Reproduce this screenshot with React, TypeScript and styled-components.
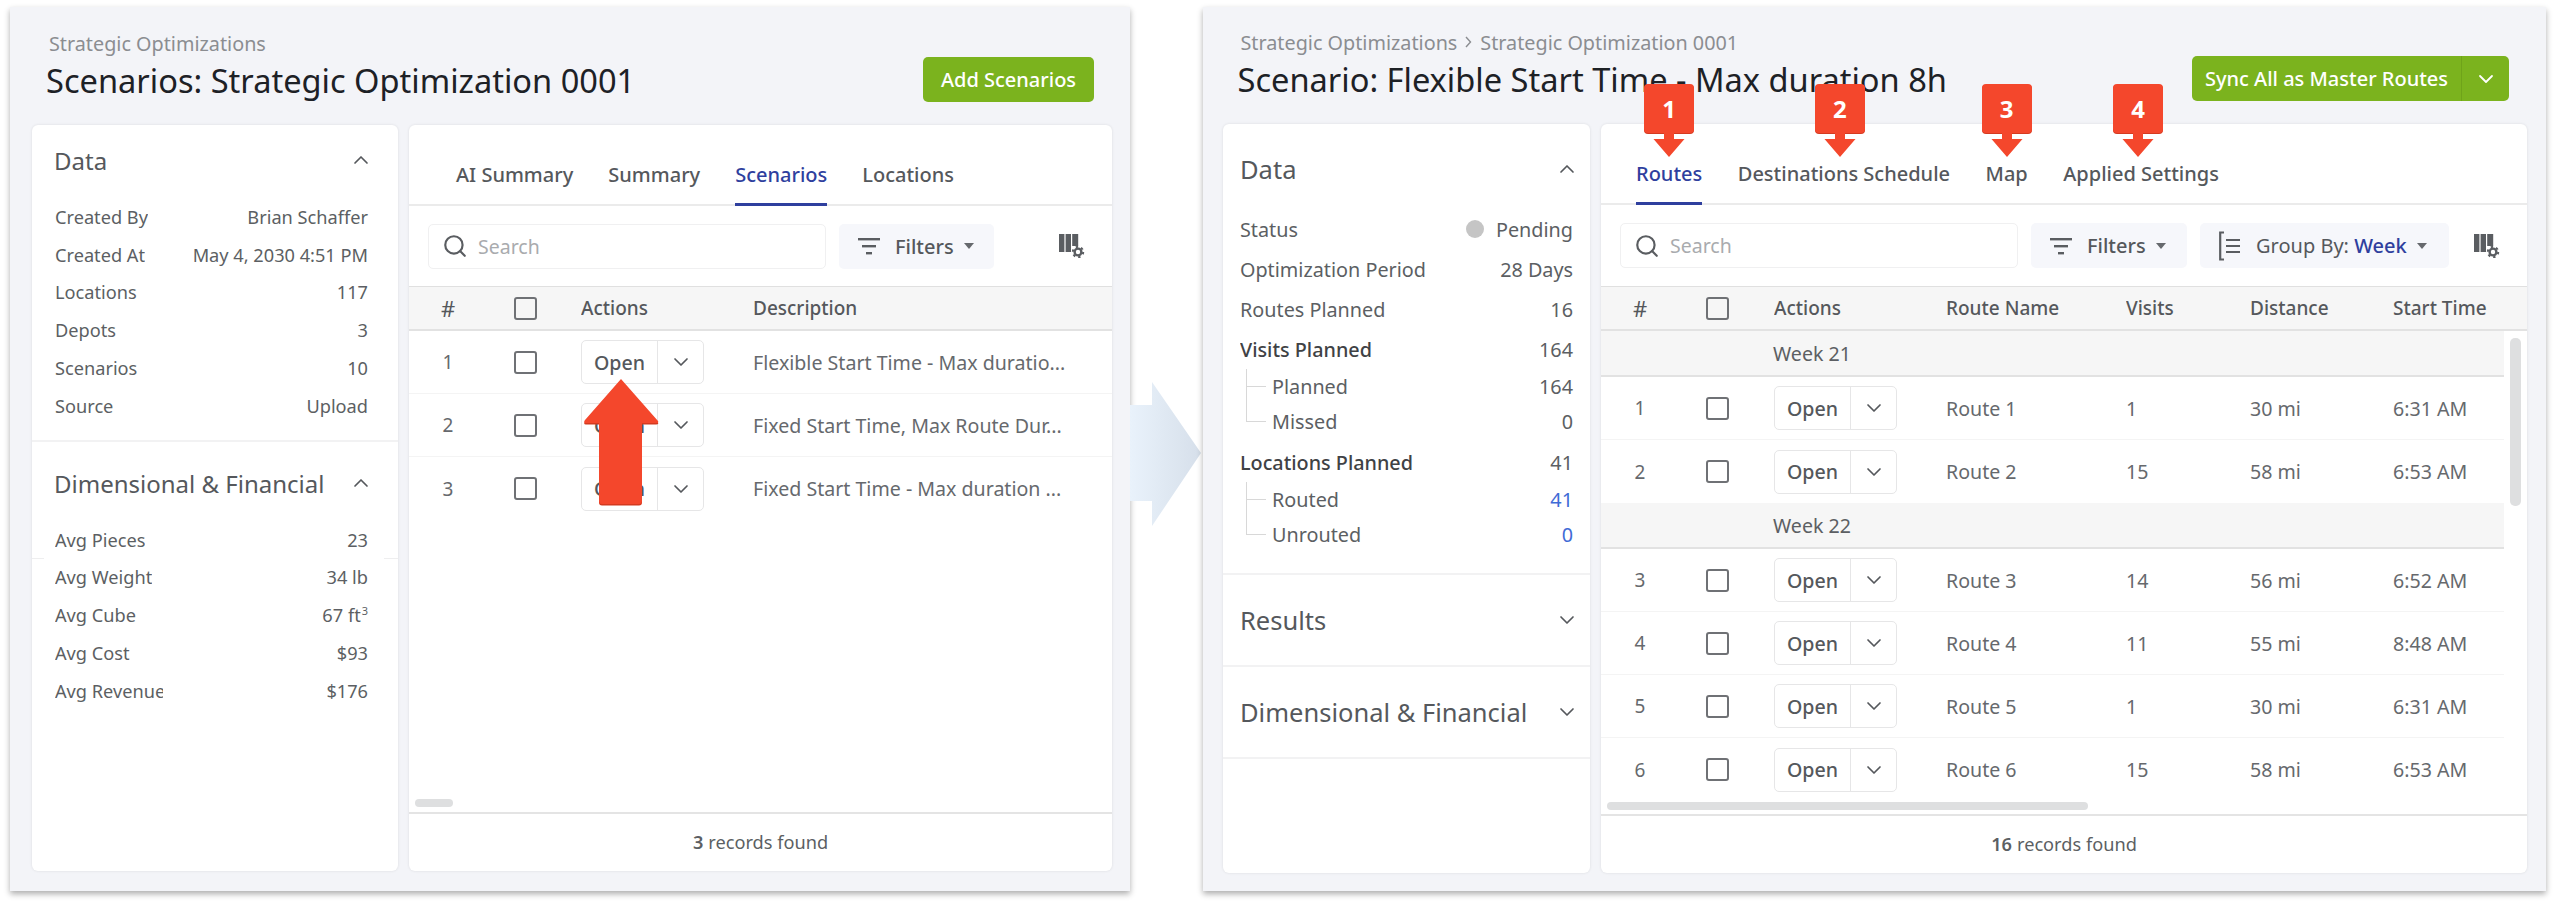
import styled, { createGlobalStyle } from "styled-components";
import { ChevronDown, ChevronUp, Search as SearchGlyph } from "lucide-react";

const GlobalStyle = createGlobalStyle`
  html, body {
    margin: 0;
    padding: 0;
    background: #fff;
  }

  * {
    box-sizing: border-box;
  }

  body {
    font-family: "Noto Sans", "Open Sans", sans-serif;
    color: #555;
  }
`;

const Page = styled.div`
  width: 2556px;
  height: 903px;
  padding: 7px 0 0 10px;
  display: flex;
  align-items: flex-start;
  overflow: hidden;
`;

const Window = styled.div<{ $width: number }>`
  width: ${(p) => p.$width}px;
  height: 884px;
  flex: none;
  display: flex;
  flex-direction: column;
  background: #f3f4f8;
  box-shadow: 0 3px 6px rgba(0, 0, 0, 0.32);
`;

const Header = styled.div<{ $left: number; $right: number; $height: number }>`
  height: ${(p) => p.$height}px;
  flex: none;
  padding: 0 ${(p) => p.$right}px 0 ${(p) => p.$left}px;
  display: flex;
  align-items: flex-start;
  justify-content: space-between;
`;

const Heading = styled.div`
  display: flex;
  flex-direction: column;
`;

const Crumbs = styled.div<{ $top: number }>`
  margin: ${(p) => p.$top}px 0 0 3px;
  display: flex;
  align-items: center;
  gap: 8px;
  height: 26px;
  font-size: 19.8px;
  color: #8b8d91;
`;

const Title = styled.h1`
  margin: 1px 0 0;
  font-size: 32.6px;
  line-height: 48px;
  font-weight: 400;
  color: #1d2126;
  white-space: nowrap;
`;

const GreenButton = styled.div<{ $top: number }>`
  margin-top: ${(p) => p.$top}px;
  height: 45px;
  display: flex;
  align-items: center;
  background: #7bb31e;
  border-radius: 5px;
  color: #fff;
  font-size: 20px;
  font-weight: 500;
  white-space: nowrap;
`;

const GreenLabel = styled.span<{ $width: number }>`
  width: ${(p) => p.$width}px;
  text-align: center;
`;

const GreenSplit = styled.span`
  width: 48px;
  height: 100%;
  display: flex;
  align-items: center;
  justify-content: center;
  border-left: 1px solid #6fa31a;
`;

const Columns = styled.div<{ $left: number; $right: number; $bottom: number }>`
  flex: 1;
  min-height: 0;
  padding: 0 ${(p) => p.$right}px ${(p) => p.$bottom}px ${(p) => p.$left}px;
  display: flex;
  gap: 11px;
`;

const Card = styled.div`
  background: #fff;
  border-radius: 6px;
  box-shadow: 0 0 3px rgba(0, 0, 0, 0.1);
`;

const SideCard = styled(Card)<{ $width: number }>`
  width: ${(p) => p.$width}px;
  flex: none;
`;

const MainCard = styled(Card)`
  flex: 1;
  min-width: 0;
  display: flex;
  flex-direction: column;
`;

const Section = styled.section<{ $pad?: number; $line?: boolean }>`
  padding: 0 0 ${(p) => p.$pad ?? 0}px;
  border-bottom: ${(p) => (p.$line ? "2px solid #f2f2f3" : "none")};
`;

const SectionHead = styled.div<{
  $height: number;
  $top?: number;
  $bottom?: number;
  $size: number;
  $left: number;
  $right: number;
}>`
  height: ${(p) => p.$height}px;
  padding: ${(p) => p.$top ?? 0}px ${(p) => p.$right}px ${(p) => p.$bottom ?? 0}px ${(p) => p.$left}px;
  display: flex;
  align-items: center;
  justify-content: space-between;
  font-size: ${(p) => p.$size}px;
  color: #55585c;
`;

const Row = styled.div<{
  $height: number;
  $size: number;
  $left: number;
  $right: number;
  $strong?: boolean;
  $stubs?: boolean;
  $gap?: number;
}>`
  height: ${(p) => p.$height}px;
  margin-top: ${(p) => p.$gap ?? 0}px;
  padding: 0 ${(p) => p.$right}px 0 ${(p) => p.$left}px;
  display: flex;
  align-items: center;
  justify-content: space-between;
  font-size: ${(p) => p.$size}px;
  color: #5c5f63;
  font-weight: ${(p) => (p.$strong ? 500 : 400)};
  ${(p) =>
    p.$stubs
      ? `background: linear-gradient(90deg, #eeeeef 0 12px, transparent 12px calc(100% - 14px), #eeeeef calc(100% - 14px)) left bottom / 100% 1px no-repeat;`
      : ""}
`;

const RowLabel = styled.span<{ $clip?: number; $dark?: boolean }>`
  white-space: nowrap;
  overflow: hidden;
  color: ${(p) => (p.$dark ? "#3f4245" : "inherit")};
  ${(p) => (p.$clip ? `max-width: ${p.$clip}px;` : "")}
`;

const RowValue = styled.span<{ $blue?: boolean }>`
  display: flex;
  align-items: center;
  gap: 12px;
  font-weight: 400;
  color: ${(p) => (p.$blue ? "#3f6bd6" : "inherit")};

  sup {
    font-size: 11px;
    line-height: 0;
    margin-left: 1px;
  }
`;

const Dot = styled.i`
  width: 18px;
  height: 18px;
  border-radius: 50%;
  background: #c5c5c5;
`;

const SubRow = styled(Row)<{ $last?: boolean }>`
  padding-left: 49px;
  background:
    linear-gradient(#d8d8d8, #d8d8d8) 23px ${(p) => (p.$last ? "0 / 1px 50%" : "0 / 1px 100%")} no-repeat,
    linear-gradient(#d8d8d8, #d8d8d8) 23px 50% / 20px 1px no-repeat;
`;

const TabBar = styled.div<{ $left: number; $gap: number }>`
  height: 81px;
  flex: none;
  padding-left: ${(p) => p.$left}px;
  display: flex;
  gap: ${(p) => p.$gap}px;
  border-bottom: 2px solid #ebebeb;
`;

const Tab = styled.div<{ $active?: boolean }>`
  position: relative;
  height: 81px;
  padding-top: 21px;
  display: flex;
  align-items: center;
  font-size: 20px;
  font-weight: 500;
  white-space: nowrap;
  color: ${(p) => (p.$active ? "#2f3f9e" : "#55585c")};
  border-bottom: 3px solid ${(p) => (p.$active ? "#2f3f9e" : "transparent")};
`;

const Callout = styled.div<{ $shift: number }>`
  position: absolute;
  left: 50%;
  top: -40px;
  margin-left: ${(p) => p.$shift - 25}px;
  width: 50px;
  display: flex;
  flex-direction: column;
  align-items: center;
`;

const CalloutBox = styled.div`
  width: 50px;
  height: 49px;
  display: flex;
  align-items: center;
  justify-content: center;
  background: #f4472c;
  border-radius: 4px;
  box-shadow: 0 1px 0 #d43a20;
  color: #fff;
  font-size: 24px;
  font-weight: 700;
`;

const Toolbar = styled.div<{ $height: number }>`
  height: ${(p) => p.$height}px;
  flex: none;
  padding: 0 27px 0 19px;
  display: flex;
  align-items: center;
  gap: 13px;
`;

const SearchBox = styled.div`
  width: 398px;
  height: 45px;
  padding-left: 13px;
  display: flex;
  align-items: center;
  gap: 10px;
  border: 1px solid #f0f0f1;
  border-radius: 5px;
  font-size: 19.5px;
  color: #a9abae;
`;

const ToolButton = styled.div<{ $width: number }>`
  width: ${(p) => p.$width}px;
  height: 45px;
  padding-left: 19px;
  display: flex;
  align-items: center;
  background: #f6f7fb;
  border-radius: 5px;
  font-size: 20px;
  font-weight: 500;
  color: #55585c;
  white-space: nowrap;
`;

const ToolText = styled.span<{ $plain?: boolean }>`
  margin-left: 15px;
  font-weight: ${(p) => (p.$plain ? 400 : 500)};

  b {
    font-weight: 500;
    color: #2f3f9e;
  }
`;

const Caret = styled.i`
  margin-left: 10px;
  width: 0;
  height: 0;
  border-left: 5px solid transparent;
  border-right: 5px solid transparent;
  border-top: 6px solid #66696d;
`;

const ColumnsButton = styled.svg`
  margin-left: auto;
  width: 26px;
  height: 24px;
  flex: none;
`;

const TableHead = styled.div<{ $columns: string }>`
  height: 45px;
  flex: none;
  display: grid;
  grid-template-columns: ${(p) => p.$columns};
  align-items: center;
  background: #f6f6f6;
  border-top: 1px solid #e0e0e0;
  border-bottom: 2px solid #e2e2e2;
  font-size: 19px;
  font-weight: 500;
  color: #55585c;
`;

const TableBody = styled.div<{ $gutter: number }>`
  position: relative;
  flex: 1;
  min-height: 0;
  padding-right: ${(p) => p.$gutter}px;
  overflow: hidden;
`;

const WeekRow = styled.div`
  height: 46px;
  padding-left: 172px;
  display: flex;
  align-items: center;
  background: #f6f6f6;
  border-bottom: 2px solid #e2e2e2;
  font-size: 19.6px;
  color: #5c5f63;
`;

const TableRow = styled.div<{ $columns: string }>`
  height: 63px;
  display: grid;
  grid-template-columns: ${(p) => p.$columns};
  align-items: center;
  border-bottom: 1px solid #f4f4f4;
  font-size: 19.6px;
  color: #66696d;
  white-space: nowrap;

  &:last-of-type {
    border-bottom: none;
  }
`;

const NumCell = styled.span<{ $head?: boolean }>`
  text-align: center;
  font-size: ${(p) => (p.$head ? 22 : 19)}px;
  font-weight: 400;
`;

const CheckCell = styled.span`
  padding-left: 27px;
  display: flex;
`;

const CheckBox = styled.i`
  width: 23px;
  height: 23px;
  border: 2px solid #6f7175;
  border-radius: 3px;
`;

const TextCell = styled.span`
  overflow: hidden;
`;

const OpenGroup = styled.div`
  width: 123px;
  height: 44px;
  display: flex;
  align-items: center;
  border: 1px solid #e6e6e7;
  border-radius: 5px;
  font-size: 19.6px;
  font-weight: 500;
  color: #55585c;
`;

const OpenLabel = styled.span`
  width: 75px;
  text-align: center;
`;

const OpenSplit = styled.span`
  flex: 1;
  height: 100%;
  display: flex;
  align-items: center;
  justify-content: center;
  border-left: 1px solid #e6e6e7;
  color: #55585c;
`;

const Thumb = styled.i<{ $side: "bottom" | "right"; $offset: number; $start: number; $length: number }>`
  position: absolute;
  background: #dedfe0;
  border-radius: 5px;
  ${(p) =>
    p.$side === "bottom"
      ? `left: ${p.$start}px; bottom: ${p.$offset}px; width: ${p.$length}px; height: 8px;`
      : `right: ${p.$offset}px; top: ${p.$start}px; width: 11px; height: ${p.$length}px;`}
`;

const Footer = styled.div`
  height: 59px;
  flex: none;
  padding-bottom: 2px;
  display: flex;
  align-items: center;
  justify-content: center;
  border-top: 2px solid #e4e4e4;
  font-size: 18.2px;
  color: #5c5f63;

  b {
    font-weight: 600;
    margin-right: 5px;
  }
`;

const BigArrow = styled.svg`
  width: 73px;
  height: 144px;
  flex: none;
  align-self: center;
  margin-top: -3px;
`;

const UpArrow = styled.svg`
  position: absolute;
  left: 175px;
  top: 47px;
  width: 75px;
  height: 128px;
`;

const FilterIcon = () => (
  <svg width="22" height="18" viewBox="0 0 22 18" fill="#5a5d61">
    <rect x="0" y="1" width="22" height="2.4" />
    <rect x="4" y="8" width="14" height="2.4" />
    <rect x="8" y="15" width="6" height="2.4" />
  </svg>
);

const GroupIcon = () => (
  <svg width="22" height="30" viewBox="0 0 22 30" fill="none" stroke="#5a5d61" strokeWidth="2.2">
    <path d="M5 1.5H1.2V28.5H5" />
    <path d="M7 9H21M7 15H21M7 21H21" />
  </svg>
);

const ColumnsIcon = () => (
  <ColumnsButton viewBox="0 0 26 24">
    <g fill="#5a5d61">
      <rect x="0" y="0" width="5.4" height="18" />
      <rect x="6.6" y="0" width="5.4" height="18" />
      <rect x="13.2" y="0" width="6" height="12" />
    </g>
    <circle cx="19" cy="18" r="3.4" fill="none" stroke="#5a5d61" strokeWidth="2.4" />
    <circle cx="19" cy="18" r="5.2" fill="none" stroke="#5a5d61" strokeWidth="2" strokeDasharray="2.4 3" />
  </ColumnsButton>
);

const SearchField = () => (
  <SearchBox>
    <SearchGlyph size={26} strokeWidth={2} color="#5a5d61" />
    Search
  </SearchBox>
);

const FiltersButton = ({ width }: { width: number }) => (
  <ToolButton $width={width}>
    <FilterIcon />
    <ToolText>Filters</ToolText>
    <Caret />
  </ToolButton>
);

const OpenButton = () => (
  <OpenGroup>
    <OpenLabel>Open</OpenLabel>
    <OpenSplit>
      <ChevronDown size={24} strokeWidth={1.7} />
    </OpenSplit>
  </OpenGroup>
);

const CalloutArrow = ({ n, shift }: { n: number; shift: number }) => (
  <Callout $shift={shift}>
    <CalloutBox>{n}</CalloutBox>
    <svg width="32" height="25" viewBox="0 0 32 25">
      <path d="M11 0H21V6H31.5L16 24L0.5 6H11Z" fill="#f4472c" />
    </svg>
  </Callout>
);

const scenarioColumns = "78px 94px 172px 1fr";
const routeColumns = "78px 95px 172px 180px 124px 143px 1fr";

const scenarios = [
  "Flexible Start Time - Max duratio...",
  "Fixed Start Time, Max Route Dur...",
  "Fixed Start Time - Max duration ...",
];

const dataRows = [
  ["Created By", "Brian Schaffer"],
  ["Created At", "May 4, 2030 4:51 PM"],
  ["Locations", "117"],
  ["Depots", "3"],
  ["Scenarios", "10"],
  ["Source", "Upload"],
];

const weeks = [
  {
    name: "Week 21",
    routes: [
      [1, "Route 1", "1", "30 mi", "6:31 AM"],
      [2, "Route 2", "15", "58 mi", "6:53 AM"],
    ],
  },
  {
    name: "Week 22",
    routes: [
      [3, "Route 3", "14", "56 mi", "6:52 AM"],
      [4, "Route 4", "11", "55 mi", "8:48 AM"],
      [5, "Route 5", "1", "30 mi", "6:31 AM"],
      [6, "Route 6", "15", "58 mi", "6:53 AM"],
    ],
  },
];

const ScenariosWindow = () => {
  const row = { $height: 37.8, $size: 18.2, $left: 23, $right: 30 };
  const head = { $size: 24, $left: 22, $right: 25 };

  return (
    <Window $width={1120}>
      <Header $left={36} $right={36} $height={118}>
        <Heading>
          <Crumbs $top={23}>Strategic Optimizations</Crumbs>
          <Title>Scenarios: Strategic Optimization 0001</Title>
        </Heading>
        <GreenButton $top={50}>
          <GreenLabel $width={171}>Add Scenarios</GreenLabel>
        </GreenButton>
      </Header>
      <Columns $left={22} $right={18} $bottom={20}>
        <SideCard $width={366}>
          <Section $pad={15} $line>
            <SectionHead {...head} $height={73} $bottom={3}>
              Data
              <ChevronUp size={24} strokeWidth={1.7} />
            </SectionHead>
            {dataRows.map(([label, value]) => (
              <Row key={label} {...row}>
                <RowLabel>{label}</RowLabel>
                <RowValue>{value}</RowValue>
              </Row>
            ))}
          </Section>
          <Section>
            <SectionHead {...head} $height={79} $top={4}>
              Dimensional &amp; Financial
              <ChevronUp size={24} strokeWidth={1.7} />
            </SectionHead>
            <Row {...row} $stubs>
              <RowLabel>Avg Pieces</RowLabel>
              <RowValue>23</RowValue>
            </Row>
            <Row {...row}>
              <RowLabel>Avg Weight</RowLabel>
              <RowValue>34 lb</RowValue>
            </Row>
            <Row {...row}>
              <RowLabel>Avg Cube</RowLabel>
              <RowValue>
                <span>
                  67 ft<sup>3</sup>
                </span>
              </RowValue>
            </Row>
            <Row {...row}>
              <RowLabel>Avg Cost</RowLabel>
              <RowValue>$93</RowValue>
            </Row>
            <Row {...row}>
              <RowLabel $clip={108}>Avg Revenue</RowLabel>
              <RowValue>$176</RowValue>
            </Row>
          </Section>
        </SideCard>
        <MainCard>
          <TabBar $left={47} $gap={35}>
            <Tab>AI Summary</Tab>
            <Tab>Summary</Tab>
            <Tab $active>Scenarios</Tab>
            <Tab>Locations</Tab>
          </TabBar>
          <Toolbar $height={80}>
            <SearchField />
            <FiltersButton width={155} />
            <ColumnsIcon />
          </Toolbar>
          <TableHead $columns={scenarioColumns}>
            <NumCell $head>#</NumCell>
            <CheckCell>
              <CheckBox />
            </CheckCell>
            <TextCell>Actions</TextCell>
            <TextCell>Description</TextCell>
          </TableHead>
          <TableBody $gutter={0}>
            {scenarios.map((text, i) => (
              <TableRow key={text} $columns={scenarioColumns}>
                <NumCell>{i + 1}</NumCell>
                <CheckCell>
                  <CheckBox />
                </CheckCell>
                <OpenButton />
                <TextCell>{text}</TextCell>
              </TableRow>
            ))}
            <UpArrow viewBox="0 0 75 128">
              <path
                d="M37 1L74 43Q75 45 72 45H58V123Q58 126 55 126H18Q15 126 15 123V45H2Q-1 45 1 42Z"
                fill="#d43a20"
                transform="translate(0 1.5)"
              />
              <path d="M37 1L74 43Q75 45 72 45H58V123Q58 126 55 126H18Q15 126 15 123V45H2Q-1 45 1 42Z" fill="#f4472c" />
            </UpArrow>
            <Thumb $side="bottom" $offset={5} $start={6} $length={38} />
          </TableBody>
          <Footer>
            <b>3</b> records found
          </Footer>
        </MainCard>
      </Columns>
    </Window>
  );
};

const RouteWindow = () => {
  const row = { $height: 40, $size: 19.8, $left: 17, $right: 17 };
  const sub = { $height: 35, $size: 19.8, $left: 17, $right: 17 };
  const head = { $size: 25.5, $left: 17, $right: 11 };

  return (
    <Window $width={1343}>
      <Header $left={34.5} $right={37} $height={117}>
        <Heading>
          <Crumbs $top={22}>
            Strategic Optimizations
            <svg width="7" height="12" viewBox="0 0 7 12" fill="none" stroke="#8b8d91" strokeWidth="1.4">
              <path d="M1 1l4.5 5L1 11" />
            </svg>
            Strategic Optimization 0001
          </Crumbs>
          <Title>Scenario: Flexible Start Time - Max duration 8h</Title>
        </Heading>
        <GreenButton $top={49}>
          <GreenLabel $width={269}>Sync All as Master Routes</GreenLabel>
          <GreenSplit>
            <ChevronDown size={24} strokeWidth={1.8} />
          </GreenSplit>
        </GreenButton>
      </Header>
      <Columns $left={20} $right={19} $bottom={18}>
        <SideCard $width={367}>
          <Section $pad={21} $line>
            <SectionHead {...head} $height={85} $top={5}>
              Data
              <ChevronUp size={24} strokeWidth={1.7} />
            </SectionHead>
            <Row {...row}>
              <RowLabel>Status</RowLabel>
              <RowValue>
                <Dot />
                Pending
              </RowValue>
            </Row>
            <Row {...row}>
              <RowLabel>Optimization Period</RowLabel>
              <RowValue>28 Days</RowValue>
            </Row>
            <Row {...row}>
              <RowLabel>Routes Planned</RowLabel>
              <RowValue>16</RowValue>
            </Row>
            <Row {...row} $strong>
              <RowLabel $dark>Visits Planned</RowLabel>
              <RowValue>164</RowValue>
            </Row>
            <SubRow {...sub}>
              <RowLabel>Planned</RowLabel>
              <RowValue>164</RowValue>
            </SubRow>
            <SubRow {...sub} $last>
              <RowLabel>Missed</RowLabel>
              <RowValue>0</RowValue>
            </SubRow>
            <Row {...row} $strong $gap={3}>
              <RowLabel $dark>Locations Planned</RowLabel>
              <RowValue>41</RowValue>
            </Row>
            <SubRow {...sub}>
              <RowLabel>Routed</RowLabel>
              <RowValue $blue>41</RowValue>
            </SubRow>
            <SubRow {...sub} $last>
              <RowLabel>Unrouted</RowLabel>
              <RowValue $blue>0</RowValue>
            </SubRow>
          </Section>
          <Section $line>
            <SectionHead {...head} $height={90}>
              Results
              <ChevronDown size={24} strokeWidth={1.7} />
            </SectionHead>
          </Section>
          <Section $line>
            <SectionHead {...head} $height={90}>
              Dimensional &amp; Financial
              <ChevronDown size={24} strokeWidth={1.7} />
            </SectionHead>
          </Section>
        </SideCard>
        <MainCard>
          <TabBar $left={35} $gap={35.5}>
            <Tab $active>
              Routes
              <CalloutArrow n={1} shift={0} />
            </Tab>
            <Tab>
              Destinations Schedule
              <CalloutArrow n={2} shift={-4} />
            </Tab>
            <Tab>
              Map
              <CalloutArrow n={3} shift={0} />
            </Tab>
            <Tab>
              Applied Settings
              <CalloutArrow n={4} shift={-3} />
            </Tab>
          </TabBar>
          <Toolbar $height={81}>
            <SearchField />
            <FiltersButton width={156} />
            <ToolButton $width={249}>
              <GroupIcon />
              <ToolText $plain>
                Group By: <b>Week</b>
              </ToolText>
              <Caret />
            </ToolButton>
            <ColumnsIcon />
          </Toolbar>
          <TableHead $columns={routeColumns}>
            <NumCell $head>#</NumCell>
            <CheckCell>
              <CheckBox />
            </CheckCell>
            <TextCell>Actions</TextCell>
            <TextCell>Route Name</TextCell>
            <TextCell>Visits</TextCell>
            <TextCell>Distance</TextCell>
            <TextCell>Start Time</TextCell>
          </TableHead>
          <TableBody $gutter={23}>
            {weeks.map((week) => (
              <div key={week.name}>
                <WeekRow>{week.name}</WeekRow>
                {week.routes.map(([num, name, visits, distance, start]) => (
                  <TableRow key={num} $columns={routeColumns}>
                    <NumCell>{num}</NumCell>
                    <CheckCell>
                      <CheckBox />
                    </CheckCell>
                    <OpenButton />
                    <TextCell>{name}</TextCell>
                    <TextCell>{visits}</TextCell>
                    <TextCell>{distance}</TextCell>
                    <TextCell>{start}</TextCell>
                  </TableRow>
                ))}
              </div>
            ))}
            <Thumb $side="bottom" $offset={4} $start={6} $length={481} />
            <Thumb $side="right" $offset={6} $start={7} $length={168} />
          </TableBody>
          <Footer>
            <b>16</b> records found
          </Footer>
        </MainCard>
      </Columns>
    </Window>
  );
};

const App = () => (
  <>
    <GlobalStyle />
    <Page>
      <ScenariosWindow />
      <BigArrow viewBox="0 0 73 144">
        <defs>
          <linearGradient id="bigArrowFill" x1="0" x2="1" y1="0" y2="0">
            <stop offset="0" stopColor="#e9f2fb" />
            <stop offset="1" stopColor="#d6dfea" />
          </linearGradient>
        </defs>
        <path d="M0 23H22V0L71 71L22 144V119H0Z" fill="url(#bigArrowFill)" />
      </BigArrow>
      <RouteWindow />
    </Page>
  </>
);

export default App;
